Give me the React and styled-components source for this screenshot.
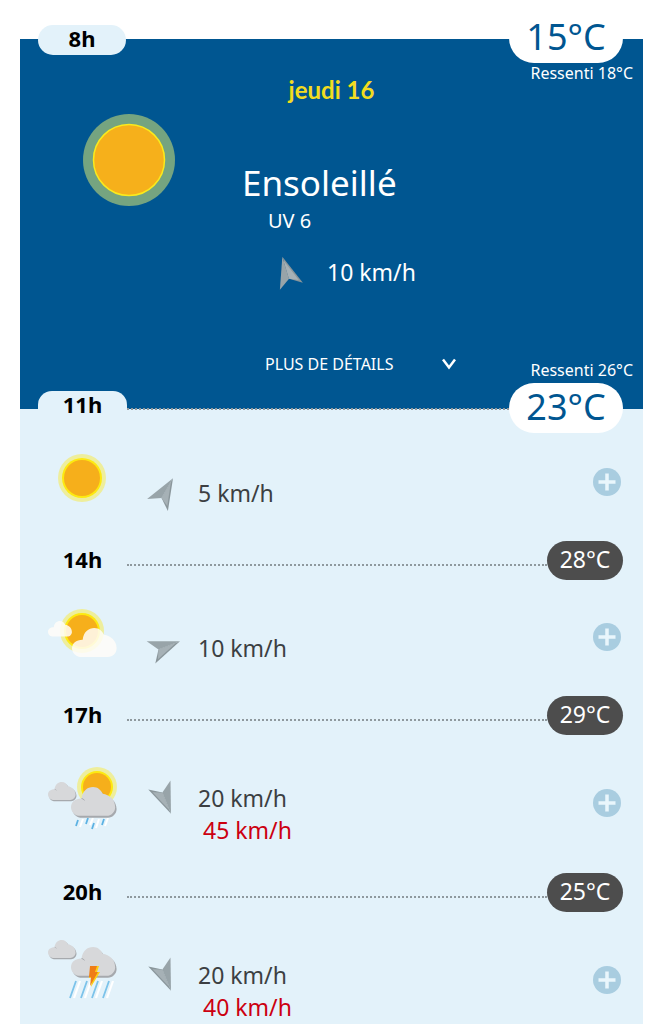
import { Fragment } from 'react';
import styled, { createGlobalStyle, css } from 'styled-components';

const colors = {
  blue: '#005691',
  pale: '#e3f2fa',
  yellow: '#f2dc20',
  grey: '#4d4d4d',
  text: '#3c3f42',
  red: '#cc0010',
  plus: '#a9cde0',
};

const GlobalStyle = createGlobalStyle`
  * {
    box-sizing: border-box;
  }

  body {
    margin: 0;
    background: #fff;
    font-family: 'Noto Sans', 'Open Sans', sans-serif;
  }

  button {
    font: inherit;
    border: none;
    padding: 0;
    cursor: pointer;
  }
`;

const Page = styled.main`
  display: flex;
  flex-direction: column;
  min-height: 100vh;
  padding: 39px 19px 0 20px;
`;

const Current = styled.section`
  position: relative;
  display: flex;
  flex-direction: column;
  height: 370px;
  padding-top: 34px;
  background: ${colors.blue};
  color: #fff;
`;

const HourBadge = styled.div`
  position: absolute;
  top: -14px;
  left: 18px;
  width: 88px;
  height: 30px;
  border-radius: 15px;
  background: ${colors.pale};
  color: #000;
  font-size: 22px;
  font-weight: 700;
  line-height: 26px;
  text-align: center;
`;

const bigTemp = css`
  width: 114px;
  height: 50px;
  border-radius: 25px;
  background: #fff;
  color: ${colors.blue};
  font-size: 36px;
  line-height: 48px;
  text-align: center;
`;

const TempBadge = styled.div`
  ${bigTemp}
  position: absolute;
  top: -26px;
  right: 20px;
`;

const FeelsLike = styled.p`
  position: absolute;
  right: 10px;
  ${props => (props.$bottom ? 'bottom: 28px;' : 'top: 23px;')}
  margin: 0;
  font-size: 16px;
  line-height: 22px;
`;

const Day = styled.h1`
  margin: 0;
  color: ${colors.yellow};
  font-family: Lato, sans-serif;
  font-size: 24px;
  font-weight: 700;
  line-height: 34px;
  text-align: center;
`;

const CurrentBody = styled.div`
  display: grid;
  grid-template-columns: 222px 1fr;
  padding-top: 6px;
`;

const BigSun = styled.svg`
  display: block;
  width: 94px;
  height: 94px;
  margin-left: 62px;
`;

const Summary = styled.div`
  padding-top: 46px;
`;

const Sky = styled.h2`
  margin: 0;
  font-size: 35px;
  font-weight: 400;
  line-height: 48px;
`;

const Uv = styled.p`
  margin: 0 0 0 26px;
  font-size: 20px;
  line-height: 28px;
`;

const CurrentWind = styled.div`
  display: flex;
  align-items: center;
  gap: 24px;
  padding: 18px 0 0 29px;
  font-size: 23px;
  line-height: 38px;
`;

const DetailsButton = styled.button`
  display: flex;
  align-items: center;
  gap: 48px;
  align-self: flex-start;
  margin: 61px 0 0 245px;
  background: none;
  color: inherit;

  && {
    font-size: 16px;
    line-height: 24px;
  }
`;

const Forecast = styled.section`
  flex: 1;
  background: ${colors.pale};
`;

const Mark = styled.div`
  display: flex;
  align-items: center;
  height: ${props => (props.$first ? 50 : 39)}px;
  margin-top: ${props => (props.$first ? -26 : 0)}px;
  padding: 0 20px 0 18px;
  position: relative;
`;

const Hour = styled.div`
  width: 89px;
  height: 34px;
  border-radius: 14px 14px 0 0;
  background: ${colors.pale};
  color: #000;
  font-size: 22px;
  font-weight: 700;
  line-height: ${props => (props.$first ? 26 : 30)}px;
  text-align: center;
`;

const Dots = styled.div`
  flex: 1;
  height: ${props => (props.$first ? 4 : 11)}px;
  border-bottom: 2px dotted #8f999e;
`;

const Temp = styled.div`
  ${props => (props.$first ? bigTemp : css`
    width: 76px;
    height: 39px;
    border-radius: 20px;
    background: ${colors.grey};
    color: #fff;
    font-size: 23px;
    line-height: 36px;
    text-align: center;
  `)}
`;

const Slot = styled.div`
  display: grid;
  grid-template-columns: 102px 49px 1fr 28px;
  align-items: center;
  height: ${props => props.$height}px;
  padding: 0 22px ${props => (props.$first ? 10 : 2)}px 27px;
`;

const SkyIcon = styled.svg`
  display: block;
  width: 72px;
  height: 80px;
  overflow: visible;
`;

const Arrow = styled.svg`
  display: block;
  flex: none;
  width: 32px;
  height: 32px;
  overflow: visible;
`;

const ArrowCell = styled.div`
  padding-top: ${props => (props.$gust ? 0 : 20)}px;
  padding-bottom: ${props => (props.$gust ? 8 : 0)}px;
`;

const Speeds = styled.div`
  padding-top: 22px;
  color: ${colors.text};
  font-size: 23px;
  line-height: 32px;
`;

const Speed = styled.p`
  margin: 0;
`;

const Gust = styled.p`
  margin: 0;
  padding-left: 5px;
  color: ${colors.red};
`;

const PlusButton = styled.button`
  display: flex;
  align-items: center;
  justify-content: center;
  width: 28px;
  height: 28px;
  border-radius: 50%;
  background: ${colors.plus};
`;

const WindArrow = ({ angle }) => (
  <Arrow viewBox="0 0 32 32" aria-hidden="true">
    <g transform={`rotate(${angle} 16 16)`}>
      <path d="M16 0 4 31 16 23Z" fill="#98a4a9" />
      <path d="M16 0 28 31 16 23Z" fill="#8a969b" />
      <path d="M16 4 25 27 16 23Z" fill="#a6b1b6" />
    </g>
  </Arrow>
);

const Sun = ({ x, y, r }) => (
  <>
    <circle cx={x} cy={y} r={r + 5} fill="#eeee9c" />
    <circle cx={x} cy={y} r={r + 1} fill="#fde910" />
    <circle cx={x} cy={y} r={r - 1} fill="#f6af1b" />
  </>
);

const cloudPath = 'M8 30C3 29 0 25 0 21C0 16 4 12 11 12C12 4 17 0 23 0C28 0 31 3 33 7C40 8 46 13 46 21C46 26 42 30 37 30Z';

const Cloud = ({ x, y, scale = 1, white }) => (
  <g transform={`translate(${x} ${y}) scale(${scale})`}>
    {!white && <path d={cloudPath} fill="#a6a9ad" transform="translate(1.5 2)" />}
    <path d={cloudPath} fill={white ? '#fffdf8' : '#d7d8da'} fillOpacity={white ? 0.85 : 1} />
    {!white && <path d="M11 12Q13 12 14 14" fill="none" stroke="#a6a9ad" />}
  </g>
);

const SkyPicture = ({ type }) => (
  <SkyIcon viewBox="0 0 72 80" role="img" aria-label={type}>
    {type === 'Ensoleillé' && <Sun x={35} y={36} r={19} />}
    {type === 'Éclaircies' && (
      <>
        <Sun x={35} y={34} r={17} />
        <Cloud x={1} y={24} scale={0.52} white />
        <Cloud x={25} y={31} scale={0.97} white />
      </>
    )}
    {type === 'Averses' && (
      <>
        <Sun x={50} y={24} r={15} />
        <Cloud x={1} y={19} scale={0.6} />
        <path d="M36 56 33 64M46 55 43 62M52 56 49 65M61 55 58 63" stroke="#fff" strokeWidth="2" />
        <path d="M31 57 29 63M41 55 39 61M47 60 45 66M57 56 55 62" stroke="#5cb2e3" strokeWidth="1.8" />
        <Cloud x={24} y={24} scale={0.96} />
      </>
    )}
    {type === 'Orages' && (
      <>
        <Cloud x={1} y={0} scale={0.6} />
        <path d="M33 41 27 58M44 41 38 58M55 41 49 58M66 41 60 58" stroke="#fff" strokeWidth="2.2" />
        <path d="M29 41 23 58M40 41 34 58M51 41 45 58M62 41 56 58" stroke="#7cc3ea" strokeWidth="1.8" />
        <Cloud x={24} y={7} scale={0.96} />
        <path d="M45 26H52L50 32H53L44 47L45 38H42Z" fill="#fcd116" />
        <path d="M43 26H50L48 32H51L43 46L44 37H42Z" fill="#ef7d17" />
      </>
    )}
  </SkyIcon>
);

const slots = [
  { hour: '11h', temp: '23°C', sky: 'Ensoleillé', angle: 30, wind: '5 km/h', height: 108 },
  { hour: '14h', temp: '28°C', sky: 'Éclaircies', angle: 69, wind: '10 km/h', height: 116 },
  { hour: '17h', temp: '29°C', sky: 'Averses', angle: 158, wind: '20 km/h', gust: '45 km/h', height: 138 },
  { hour: '20h', temp: '25°C', sky: 'Orages', angle: 158, wind: '20 km/h', gust: '40 km/h', height: 138 },
];

const App = () => {
  return (
    <>
      <GlobalStyle />
      <Page>
        <Current>
          <HourBadge>8h</HourBadge>
          <TempBadge>15°C</TempBadge>
          <FeelsLike>Ressenti 18°C</FeelsLike>
          <Day>jeudi 16</Day>
          <CurrentBody>
            <BigSun viewBox="0 0 94 94" aria-hidden="true">
              <circle cx="47" cy="47" r="46" fill="#75a480" />
              <circle cx="47" cy="47" r="35.5" fill="#f6b01b" stroke="#fbea1c" strokeWidth="1.5" />
            </BigSun>
            <Summary>
              <Sky>Ensoleillé</Sky>
              <Uv>UV 6</Uv>
              <CurrentWind>
                <WindArrow angle={-17} />
                <span>10 km/h</span>
              </CurrentWind>
            </Summary>
          </CurrentBody>
          <DetailsButton>
            PLUS DE DÉTAILS
            <svg width="16" height="12" viewBox="0 0 16 12" fill="none" stroke="#fff" strokeWidth="2.5" aria-hidden="true">
              <path d="M2 1.5 8 9.5 14 1.5" />
            </svg>
          </DetailsButton>
          <FeelsLike $bottom>Ressenti 26°C</FeelsLike>
        </Current>
        <Forecast>
          {slots.map((slot, i) => (
            <Fragment key={slot.hour}>
              <Mark $first={i === 0}>
                <Hour $first={i === 0}>{slot.hour}</Hour>
                <Dots $first={i === 0} />
                <Temp $first={i === 0}>{slot.temp}</Temp>
              </Mark>
              <Slot $first={i === 0} $height={slot.height}>
                <SkyPicture type={slot.sky} />
                <ArrowCell $gust={slot.gust}>
                  <WindArrow angle={slot.angle} />
                </ArrowCell>
                <Speeds>
                  <Speed>{slot.wind}</Speed>
                  {slot.gust && <Gust>{slot.gust}</Gust>}
                </Speeds>
                <PlusButton aria-label={`Détails ${slot.hour}`}>
                  <svg width="18" height="18" viewBox="0 0 18 18" stroke="#e9f6fc" strokeWidth="3.5" aria-hidden="true">
                    <path d="M9 0.5V17.5M0.5 9H17.5" />
                  </svg>
                </PlusButton>
              </Slot>
            </Fragment>
          ))}
        </Forecast>
      </Page>
    </>
  );
};

export default App;
